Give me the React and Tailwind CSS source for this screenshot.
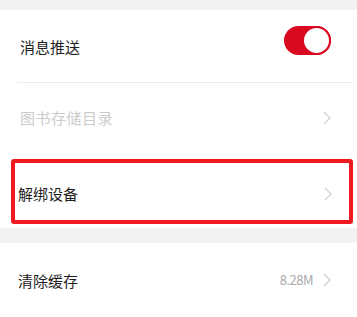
import React from "react";

function Chevron() {
  return (
    <svg width="8" height="14" viewBox="0 0 8 14" fill="none">
      <polyline points="1,1 7,7 1,13" stroke="#cfcfcf" strokeWidth="1.2" fill="none" />
    </svg>
  );
}

export default function App() {
  return (
    <div
      className="w-[357px] h-[317px] bg-[#f2f2f2] pt-[10px] overflow-hidden"
      style={{ fontFamily: '"Noto Sans CJK SC", "Noto Sans", sans-serif' }}
    >
      <div className="bg-white">
        <div className="h-[72px] flex items-center justify-between pl-[20px] pr-[26px]">
          <span className="text-[15px] text-[#1e1e1e] mt-[2px]">消息推送</span>
          <div className="w-[47px] h-[29px] rounded-full bg-[#d90a20] flex items-center justify-end mb-[11px]">
            <div className="w-[29px] h-[29px] rounded-full bg-white border-[2px] border-[#d90a20]" />
          </div>
        </div>
        <div className="ml-[17px] mr-[5px] h-px bg-[#ececec]" />
        <div className="h-[74px] flex items-center justify-between pl-[20px] pr-[26px]">
          <span className="text-[15px] text-[#cccccc] -mt-[4px] tracking-[0.5px]">图书存储目录</span>
          <div className="-mt-[4px]">
            <Chevron />
          </div>
        </div>
        <div className="h-[71px] pt-[2px] pb-[4px] pl-[11px] pr-[4px]">
          <div className="h-full border-[4px] border-[#ee1a1f] rounded-[3px] flex items-center justify-between pl-[3px] pr-[17px] pt-[5px]">
            <span className="text-[15px] text-[#1e1e1e]">解绑设备</span>
            <Chevron />
          </div>
        </div>
      </div>
      <div className="h-[15px]" />
      <div className="bg-white h-[74px] flex items-center justify-between pl-[18px] pr-[26px]">
        <span className="text-[15px] text-[#1e1e1e] mt-[2px]">清除缓存</span>
        <div className="flex items-center gap-[10px]">
          <span className="text-[13px] text-[#aaaaaa] tracking-[-0.5px]">8.28M</span>
          <Chevron />
        </div>
      </div>
    </div>
  );
}
